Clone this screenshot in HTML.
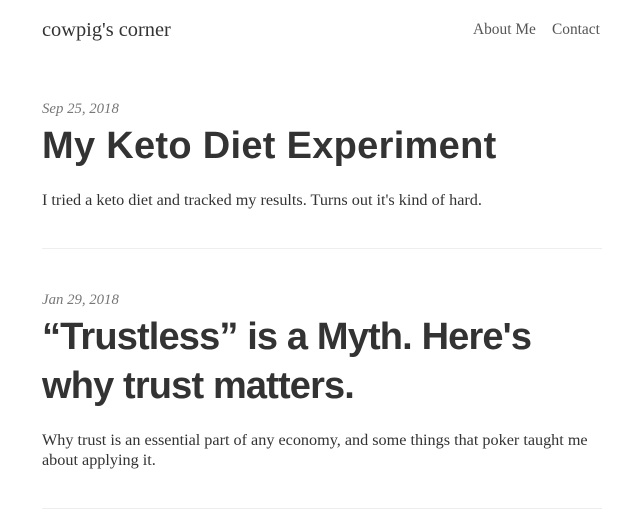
<!DOCTYPE html>
<html><head><meta charset="utf-8"><style>
*{margin:0;padding:0;box-sizing:border-box}
body{width:644px;height:523px;overflow:hidden;background:#fff;color:#333;font-family:"Liberation Serif",serif;position:relative}
.a{position:absolute;white-space:nowrap}
.logo{left:42px;top:19px;font-size:20.4px;color:#333}
.nav{top:21px;font-size:15.4px;color:#555}
.date{left:42px;font-style:italic;font-size:14.8px;color:#777}
.t{left:42px;font-family:"Liberation Sans",sans-serif;font-weight:bold;font-size:38px;color:#333;letter-spacing:0.3px;line-height:49px}
.s{left:42px;font-size:16.2px;line-height:20px;color:#333}
.hr{position:absolute;left:42px;width:560px;height:1px;background:#eee}
</style></head><body>
<div class="a logo">cowpig's corner</div>
<div class="a nav" style="left:473px">About Me</div>
<div class="a nav" style="left:552px">Contact</div>
<div class="a date" style="top:101px">Sep 25, 2018</div>
<div class="a t" style="top:122px">My Keto Diet Experiment</div>
<div class="a s" style="top:190px">I tried a keto diet and tracked my results. Turns out it's kind of hard.</div>
<div class="hr" style="top:248px"></div>
<div class="a date" style="top:292px">Jan 29, 2018</div>
<div class="a t" style="top:313px;letter-spacing:-0.85px">“Trustless” is a Myth. Here's<br>why trust matters.</div>
<div class="a s" style="top:430px">Why trust is an essential part of any economy, and some things that poker taught me<br>about applying it.</div>
<div class="hr" style="top:508px"></div>
</body></html>
